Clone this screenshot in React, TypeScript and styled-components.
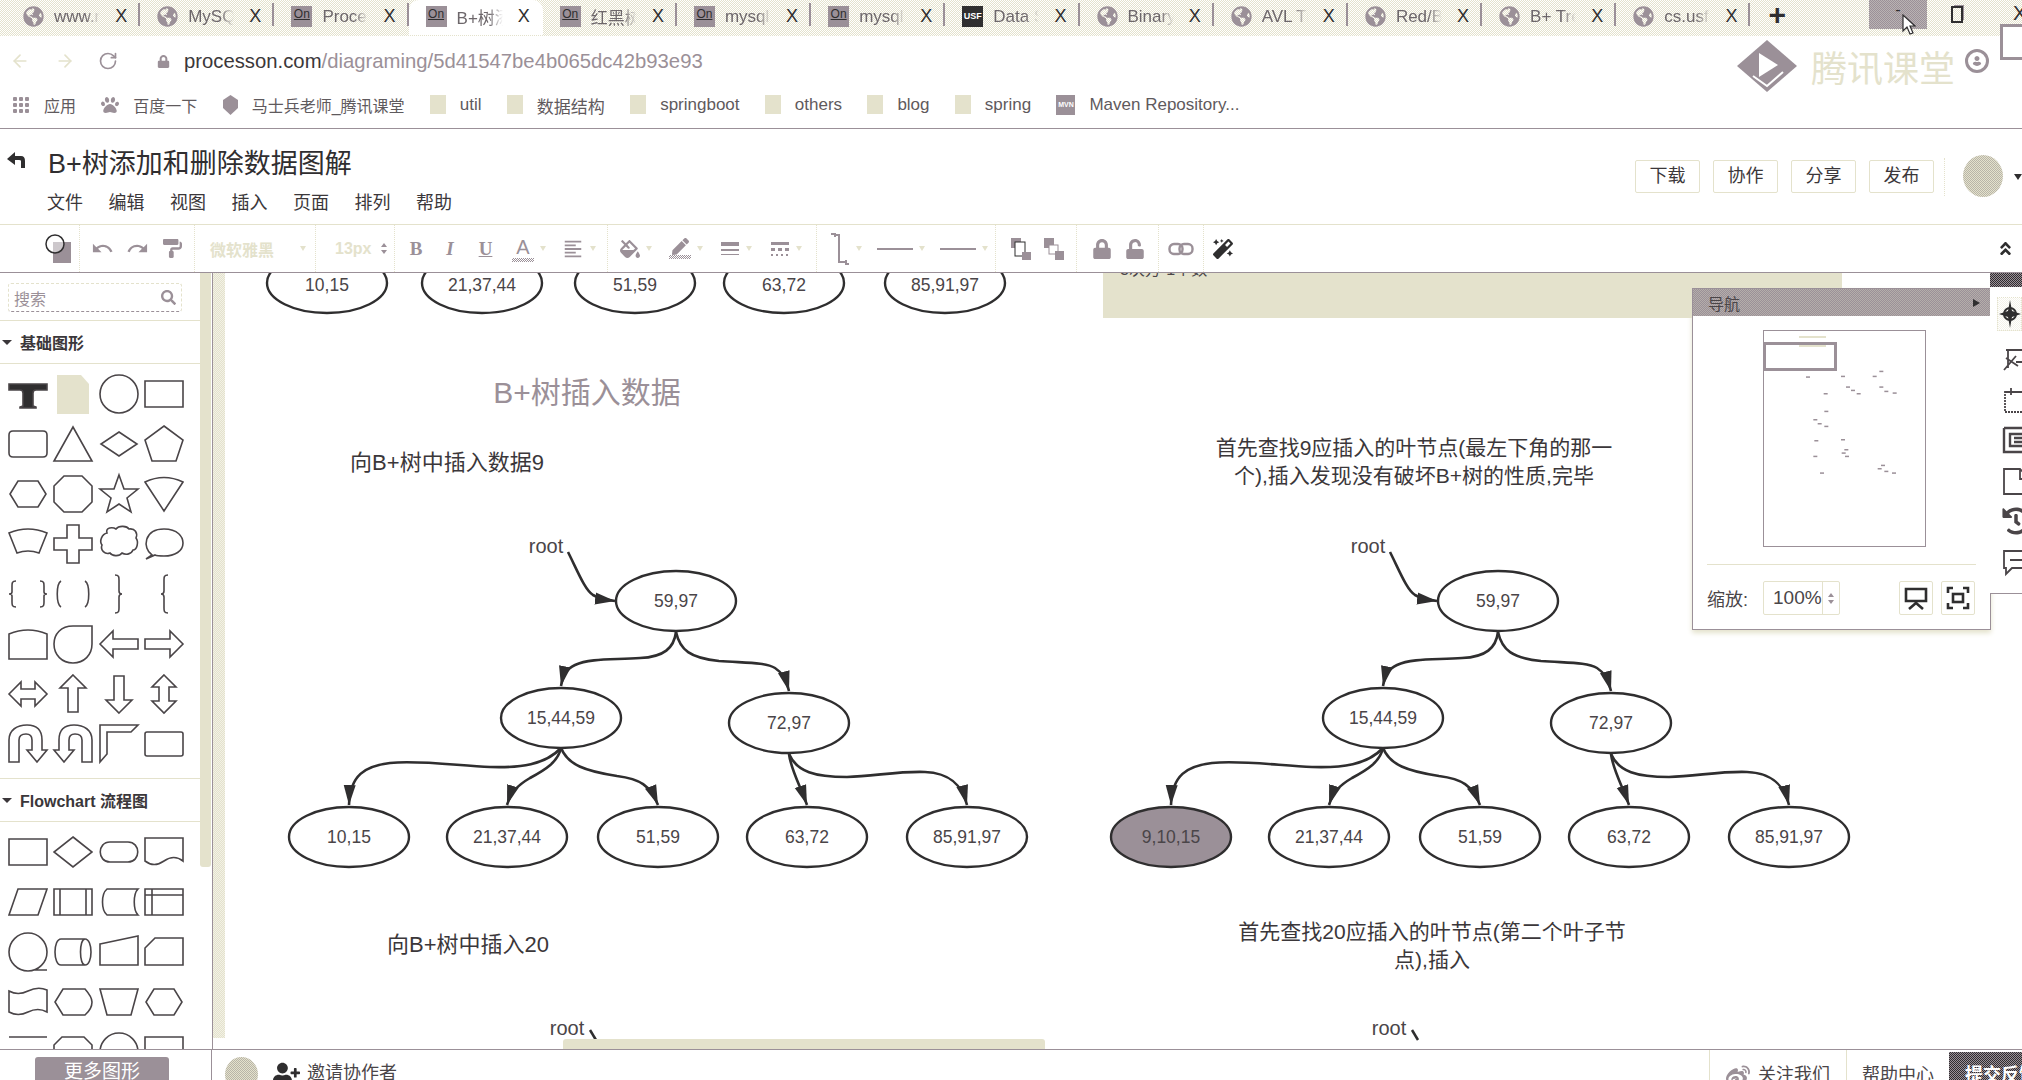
import React from 'react'
import styled, { createGlobalStyle } from 'styled-components'
import { FaAngleDoubleUp, FaFillDrip, FaGlobeAmericas, FaHistory, FaLock, FaMagic, FaPaintRoller, FaPaw, FaPen, FaSearch, FaUnlock, FaUser, FaUserPlus, FaWeibo } from 'react-icons/fa'
import { MdFormatAlignLeft, MdRedo, MdUndo } from 'react-icons/md'
import { ArrowLeft, ArrowRight, RotateCw } from 'lucide-react'

const Beige = '#e4e2cc'
const Gray = '#9b9098'
const Ink = '#2f2e2f'
const Sans = '"Liberation Sans", "Noto Sans CJK SC", sans-serif'

const dither = (a: string, b: string) => `repeating-conic-gradient(${a} 0 25%, ${b} 0 50%) 0 0 / 2px 2px`

const GlobalStyle = createGlobalStyle`
  html, body { margin: 0; padding: 0; background: #fff; }
  body { font-family: ${Sans}; color: ${Ink}; }
  * { box-sizing: border-box; }
`

const Page = styled.div`
  position: relative;
  display: flex;
  flex-direction: column;
  width: 2022px;
  height: 1080px;
  overflow: hidden;
`

/* browser chrome */
const TabStrip = styled.div`
  display: flex;
  flex: 0 0 36px;
  padding-left: 6px;
  background: ${dither(Beige, '#fff')};
`

const Tab = styled.div<{ $active?: boolean }>`
  display: flex;
  align-items: center;
  width: 134.2px;
  height: 35px;
  padding: 0 13px 2px 17px;
  gap: 10px;
  background: ${p => (p.$active ? '#fff' : 'transparent')};
  border-radius: 10px 10px 0 0;
  position: relative;
  &::after {
    content: '';
    position: absolute;
    right: 0;
    top: 3px;
    bottom: 9px;
    border-right: 2px solid ${p => (p.$active ? 'transparent' : Gray)};
  }
`

const OnIcon = styled.span`
  flex: 0 0 21px;
  height: 21px;
  background: ${Gray};
  color: ${Ink};
  font-size: 12px;
  line-height: 17px;
  text-align: center;
  text-decoration: underline;
`

const UsfIcon = styled(OnIcon)`
  background: ${Ink};
  color: #fff;
  font-size: 9px;
  font-weight: 700;
  line-height: 21px;
  text-decoration: none;
`

const TabTitle = styled.span`
  width: 46px;
  overflow: hidden;
  white-space: nowrap;
  font-size: 17px;
  color: #6d676b;
  mask-image: linear-gradient(90deg, #000 70%, transparent);
`

const TabClose = styled.span`
  margin-left: auto;
  font-size: 18px;
  color: ${Ink};
`

const NewTab = styled.span`
  margin-left: 18px;
  font-size: 30px;
  line-height: 30px;
  font-weight: 700;
  color: ${Ink};
`

const WinControls = styled.div`
  display: flex;
  margin-left: auto;
  height: 29px;
`

const WinMin = styled.div`
  position: relative;
  width: 58px;
  background: ${dither(Gray, '#b9b3b3')};
  color: ${Ink};
  text-align: center;
  line-height: 20px;
`

const WinRestore = styled.div`
  width: 60px;
  display: flex;
  align-items: center;
  justify-content: center;
`

const RestoreGlyph = styled.span`
  display: block;
  width: 12px;
  height: 17px;
  border: 2px solid ${Ink};
  box-shadow: 2px -2px 0 -1px ${Gray};
`

const WinClose = styled.div`
  width: 35px;
  padding-left: 26px;
  font-size: 20px;
  line-height: 26px;
  color: ${Ink};
`

const Cursor = styled.svg`
  position: absolute;
  left: 33px;
  top: 14px;
`

const AddressBar = styled.div`
  display: flex;
  align-items: center;
  flex: 0 0 52px;
  padding: 0 33px 2px 8px;
`

const NavButton = styled.span<{ $w: number; $dark?: boolean }>`
  display: flex;
  justify-content: center;
  width: ${p => p.$w}px;
  color: ${p => (p.$dark ? Gray : Beige)};
`

const LockGlyph = styled(FaLock)`
  margin: 0 14px 0 39px;
  color: ${Gray};
`

const Url = styled.div`
  font-size: 20.3px;
  color: ${Gray};
  & > b {
    font-weight: 400;
    color: #3b373a;
  }
`

const Profile = styled(FaUser)`
  margin-left: auto;
  width: 24px;
  height: 24px;
  padding: 4px;
  border: 3px solid ${Gray};
  border-radius: 50%;
  color: ${Gray};
`

const Watermark = styled.div`
  position: absolute;
  left: 1737px;
  top: 40px;
  display: flex;
  align-items: center;
  gap: 14px;
  font-size: 36px;
  color: ${Beige};
  font-family: "Noto Sans CJK SC", sans-serif;
`

const ExtBox = styled.div`
  position: absolute;
  left: 2000px;
  top: 24px;
  width: 30px;
  height: 36px;
  border: 3px solid ${Gray};
  background: #fff;
`

const Bookmarks = styled.div`
  display: flex;
  align-items: center;
  flex: 0 0 41px;
  gap: 25.3px;
  padding: 0 0 6px 12px;
  border-bottom: 1px solid ${Gray};
  font-size: 16px;
  color: #5f5a5d;
`

const Bookmark = styled.div`
  display: flex;
  align-items: center;
  gap: 14px;
  white-space: nowrap;
`

const BookmarkEn = styled.span`
  font-size: 17px;
`

const Folder = styled.span`
  width: 16px;
  height: 20px;
  background: ${Beige};
  border-bottom: 1px solid #fff;
`

const MvnIcon = styled.span`
  width: 19px;
  height: 20px;
  background: ${Gray};
  color: #fff;
  font-size: 7px;
  line-height: 20px;
  text-align: center;
  font-weight: 700;
`

const AppsGrid = styled.span`
  width: 18px;
  height: 18px;
  background: radial-gradient(circle, ${Gray} 2px, transparent 2.5px) 0 0 / 6px 6px;
`

/* document title */
const TitleBar = styled.div`
  display: flex;
  flex: 0 0 95px;
`

const TitleColumn = styled.div`
  padding-top: 16px;
`

const TitleRow = styled.div`
  display: flex;
  align-items: center;
  gap: 22px;
  padding-left: 6px;
  height: 32px;
  font-size: 27px;
  color: #302e30;
`

const MenuRow = styled.div`
  display: flex;
  gap: 25.5px;
  margin-top: 14px;
  padding-left: 47px;
  font-size: 18px;
  line-height: 24px;
  color: #3b373a;
`

const Actions = styled.div`
  display: flex;
  align-items: flex-start;
  gap: 13px;
  margin-left: auto;
  padding-top: 31px;
`

const ActionButton = styled.div`
  width: 65px;
  height: 33px;
  border: 1px solid ${Beige};
  border-radius: 2px;
  text-align: center;
  font-size: 18px;
  line-height: 31px;
  color: #3b373a;
`

const ActionDivider = styled.div`
  width: 0;
  height: 38px;
  margin: -2px 3px 0 -3px;
  border-left: 1px dotted ${Beige};
`

const Avatar = styled.div<{ $size: number }>`
  flex: none;
  width: ${p => p.$size}px;
  height: ${p => p.$size + 2}px;
  border-radius: 50%;
  background: ${dither(Beige, '#b8b4a8')};
`

const HeaderAvatar = styled(Avatar)`
  margin: -5px 0 0 2px;
`

const HeaderCaret = styled.span`
  margin: 14px 0 0 -2px;
  border-top: 6px solid ${Ink};
  border-left: 4px solid transparent;
  border-right: 4px solid transparent;
`

/* toolbar */
const Toolbar = styled.div`
  display: flex;
  flex: 0 0 49px;
  padding-left: 36px;
  border-top: 1px solid ${Beige};
  border-bottom: 1px solid ${Gray};
`

const ToolGroup = styled.div<{ $w: number; $pad?: number }>`
  display: flex;
  align-items: center;
  flex: 0 0 ${p => p.$w}px;
  padding-left: ${p => p.$pad ?? 0}px;
  border-right: 1px dotted ${Beige};
`

const Tool = styled.div<{ $w: number }>`
  display: flex;
  align-items: center;
  justify-content: center;
  gap: 6px;
  flex: 0 0 ${p => p.$w}px;
  color: ${Gray};
`

const Caret = styled.span`
  width: 0;
  border-top: 5px solid ${Beige};
  border-left: 3px solid transparent;
  border-right: 3px solid transparent;
`

const FontSelect = styled.span`
  width: 90px;
  margin-left: 15px;
  font-size: 16px;
  color: ${Beige};
  font-weight: 700;
`

const SizeSelect = styled.span`
  margin-left: 19px;
  width: 46px;
  font-size: 16px;
  color: ${Beige};
  font-weight: 700;
`

const Spin = styled.span`
  display: flex;
  flex-direction: column;
  align-items: center;
  justify-content: center;
  gap: 3px;
`

const SpinUp = styled.i`
  border-bottom: 4px solid ${Gray};
  border-left: 3px solid transparent;
  border-right: 3px solid transparent;
`

const SpinDown = styled.i`
  border-top: 4px solid ${Gray};
  border-left: 3px solid transparent;
  border-right: 3px solid transparent;
`

const FormatGlyph = styled.span<{ $italic?: boolean; $under?: boolean }>`
  font-family: "Liberation Serif", serif;
  font-size: 19px;
  font-weight: 700;
  font-style: ${p => (p.$italic ? 'italic' : 'normal')};
  text-decoration: ${p => (p.$under ? 'underline' : 'none')};
  color: ${Gray};
`

const ColorGlyph = styled.span`
  display: flex;
  flex-direction: column;
  align-items: center;
  font-size: 20px;
  line-height: 22px;
  color: ${Gray};
  &::after {
    content: '';
    width: 22px;
    height: 4px;
    background: ${dither(Gray, '#fff')};
  }
`

const PenGlyph = styled(ColorGlyph)`
  font-size: 15px;
`

const Collapse = styled.div`
  display: flex;
  align-items: center;
  margin-left: auto;
  padding-right: 8px;
`

/* main */
const Main = styled.div`
  display: flex;
  flex: 0 0 777px;
  height: 777px;
  border-bottom: 1px solid ${Gray};
`

const Sidebar = styled.aside`
  display: flex;
  flex: 0 0 213px;
  overflow: hidden;
`

const Palette = styled.div`
  flex: 0 0 200px;
  overflow: hidden;
`

const SearchArea = styled.div`
  padding: 10px 18px 8px 8px;
  border-bottom: 1px solid ${Beige};
`

const SearchBox = styled.div`
  display: flex;
  align-items: center;
  justify-content: space-between;
  height: 29px;
  padding: 0 5px;
  border: 1px dashed ${Beige};
  border-bottom-color: ${Gray};
  border-radius: 3px;
  font-size: 16px;
  color: ${Gray};
`

const SectionHead = styled.div`
  display: flex;
  align-items: center;
  gap: 8px;
  height: 43px;
  padding-left: 2px;
  font-size: 16px;
  font-weight: 700;
  color: #3b373a;
  border-bottom: 1px solid ${Beige};
`

const HeadCaret = styled.span`
  border-top: 5px solid #3b373a;
  border-left: 5px solid transparent;
  border-right: 5px solid transparent;
`

const ShapeGrid = styled.div<{ $bottom?: number }>`
  display: grid;
  grid-template-columns: repeat(4, 45.5px);
  grid-auto-rows: 50px;
  padding: 5px 0 ${p => p.$bottom ?? 0}px 5px;
  border-bottom: 1px solid ${Beige};
`

const ShapeCell = styled.div`
  display: flex;
  align-items: center;
  justify-content: center;
`

const ShapeSvg = styled.svg`
  width: 40px;
  height: 40px;
  overflow: visible;
  fill: #fff;
  stroke: #4a4548;
  stroke-width: 1.6;
`

const ScrollColumn = styled.div`
  flex: 0 0 13px;
  border-right: 1px solid ${Gray};
  padding-right: 1px;
`

const ScrollThumbV = styled.div<{ $h: number; $w?: number }>`
  width: ${p => p.$w ?? 11}px;
  height: ${p => p.$h}px;
  background: ${Beige};
  border-radius: 0 0 3px 3px;
`

const Canvas = styled.div`
  position: relative;
  flex: 1;
  overflow: hidden;
`

const DiagramSvg = styled.svg`
  position: absolute;
  left: 0;
  top: 0;
`

const NodeText = styled.text`
  font-family: ${Sans};
  font-size: 17.5px;
  fill: #4a4548;
  text-anchor: middle;
  dominant-baseline: central;
`

const RootText = styled(NodeText)`
  font-size: 20px;
`

const DiagramLabel = styled.div<{ $x: number; $y: number; $size?: number; $heading?: boolean }>`
  position: absolute;
  left: ${p => p.$x - 213}px;
  top: ${p => p.$y - 273}px;
  transform: translate(-50%, -50%);
  text-align: center;
  white-space: nowrap;
  font-size: ${p => p.$size ?? 21}px;
  line-height: 28px;
  color: ${p => (p.$heading ? Gray : '#3b373a')};
`

const NoteBox = styled.div`
  position: absolute;
  left: 890px;
  top: 0;
  width: 739px;
  height: 45px;
  background: ${Beige};
  padding-left: 17px;
  font-size: 16px;
  line-height: 16px;
  color: #4a4548;
  overflow: hidden;
`

const NoteText = styled.div`
  margin-top: -11px;
`

const CanvasScrollV = styled.div`
  position: absolute;
  left: 0;
  top: 0;
  width: 12px;
  height: 765px;
  background: ${dither(Beige, '#f2f1e6')};
`

const CanvasScrollH = styled.div`
  position: absolute;
  left: 350px;
  bottom: 0;
  width: 482px;
  height: 10px;
  background: ${Beige};
  border-radius: 3px 3px 0 0;
`

/* navigator */
const NavPanel = styled.section`
  position: absolute;
  left: 1479px;
  top: 15px;
  width: 299px;
  height: 342px;
  display: flex;
  flex-direction: column;
  background: #fff;
  border: 1px solid ${Gray};
  box-shadow: 0 3px 5px ${Beige};
`

const NavHead = styled.div`
  display: flex;
  align-items: center;
  justify-content: space-between;
  flex: 0 0 27px;
  padding: 0 10px 0 15px;
  background: ${dither(Gray, '#b4aeaa')};
  font-size: 16px;
  color: #4a4548;
`

const HeadArrow = styled.span`
  border-left: 7px solid ${Ink};
  border-top: 4px solid transparent;
  border-bottom: 4px solid transparent;
`

const NavBody = styled.div`
  display: flex;
  justify-content: center;
  flex: 0 0 249px;
  padding: 14px 0 0 6px;
  margin: 0 14px;
  border-bottom: 1px solid ${Beige};
`

const MiniPage = styled.div`
  position: relative;
  width: 163px;
  height: 217px;
  border: 1px solid ${Gray};
`

const MiniView = styled.div`
  position: absolute;
  left: -1px;
  top: 11px;
  width: 74px;
  height: 29px;
  border: 3px solid ${Gray};
`

const ZoomRow = styled.div`
  display: flex;
  align-items: center;
  padding: 16px 15px 0 14px;
  font-size: 18px;
  color: #4a4548;
`

const ZoomInput = styled.div`
  display: flex;
  align-items: center;
  justify-content: space-between;
  width: 77px;
  height: 34px;
  margin-left: 15px;
  padding-left: 9px;
  border: 1px solid ${Beige};
  border-radius: 2px;
  font-size: 19px;
`

const ZoomSpin = styled(Spin)`
  width: 18px;
  height: 100%;
  border-left: 1px solid ${Beige};
`

const ZoomButton = styled.div<{ $first?: boolean }>`
  display: flex;
  align-items: center;
  justify-content: center;
  width: 34px;
  height: 34px;
  margin-left: ${p => (p.$first ? 'auto' : '8px')};
  border: 1px solid ${Beige};
  border-radius: 2px;
`

const RightRail = styled.div`
  position: absolute;
  right: 0;
  top: 0;
  display: flex;
  flex-direction: column;
  width: 32px;
  height: 321px;
  background: #fff;
  border-bottom: 1px solid ${Gray};
  overflow: hidden;
`

const RailTop = styled.div`
  flex: 0 0 14px;
  background: ${dither(Ink, Gray)};
`

const RailActive = styled.div`
  display: flex;
  align-items: center;
  justify-content: center;
  flex: 0 0 34px;
  margin: 10px 0 8px 7px;
  border: 1px dotted ${Beige};
  background: ${dither('#fff', '#f4f3ea')};
`

const RailItem = styled.div`
  display: flex;
  align-items: center;
  flex: 0 0 40.5px;
  padding-left: 12px;
  color: #4a4548;
`

const RailSvg = styled.svg`
  flex: none;
  width: 30px;
  height: 30px;
  fill: none;
  stroke: #4a4548;
  stroke-width: 1.8;
`

/* bottom bar */
const BottomBar = styled.footer`
  display: flex;
  flex: 1;
  min-height: 0;
  overflow: hidden;
  font-size: 18px;
  color: #4a4548;
`

const MoreArea = styled.div`
  flex: 0 0 212px;
  padding: 7px 0 0 35px;
  border-right: 1px solid ${Gray};
`

const MoreButton = styled.div`
  width: 134px;
  height: 30px;
  border-radius: 3px 3px 0 0;
  background: ${Gray};
  color: #fff;
  font-size: 19px;
  line-height: 30px;
  text-align: center;
`

const InviteArea = styled.div`
  display: flex;
  gap: 7px;
  padding: 7px 0 0 13px;
  height: 60px;
`

const InviteAvatar = styled(Avatar)`
  margin-right: 8px;
`

const InviteText = styled.span`
  line-height: 32px;
`

const FootRight = styled.div`
  display: flex;
  margin-left: auto;
`

const FootItem = styled.div<{ $w: number }>`
  display: flex;
  justify-content: center;
  gap: 8px;
  width: ${p => p.$w}px;
  padding-top: 14px;
  border-left: 1px solid ${Beige};
  line-height: 22px;
`

const FeedbackButton = styled.div`
  width: 73px;
  margin-top: 2px;
  padding: 12px 0 0 16px;
  background: ${dither(Ink, Gray)};
  color: #fff;
  font-weight: 700;
  white-space: nowrap;
  line-height: 22px;
  overflow: hidden;
`

type TabInfo = { title: string; icon: 'globe' | 'on' | 'usf'; active?: boolean }

const tabs: TabInfo[] = [
  { title: 'www.r', icon: 'globe' },
  { title: 'MySQ', icon: 'globe' },
  { title: 'Proces', icon: 'on' },
  { title: 'B+树添', icon: 'on', active: true },
  { title: '红黑树', icon: 'on' },
  { title: 'mysql', icon: 'on' },
  { title: 'mysql', icon: 'on' },
  { title: 'Data S', icon: 'usf' },
  { title: 'Binary', icon: 'globe' },
  { title: 'AVL Tr', icon: 'globe' },
  { title: 'Red/B', icon: 'globe' },
  { title: 'B+ Tre', icon: 'globe' },
  { title: 'cs.usfc', icon: 'globe' },
]

const folders = ['util', '数据结构', 'springboot', 'others', 'blog', 'spring']
const menus = ['文件', '编辑', '视图', '插入', '页面', '排列', '帮助']
const actions = ['下载', '协作', '分享', '发布']

type Shape = { d: string; fill?: string }

const arch = 'M1 38V16C1 6 9 1 19 1C29 1 34 6 34 16V26H39L29 38L19 26H24V16C24 12 22 10 18 10C14 10 11 12 11 16V38Z'
const archMirror = 'M39 38V16C39 6 31 1 21 1C11 1 6 6 6 16V26H1L11 38L21 26H16V16C16 12 18 10 22 10C26 10 29 12 29 16V38Z'

const basicShapes: Shape[] = [
  { d: 'M1 10H39V16H28Q25 16 25 19V32L28 33V34H12V33L15 32V19Q15 16 12 16H1Z', fill: Ink },
  { d: 'M4 1H28L36 10V40H4Z', fill: Beige },
  { d: 'M39 20A19 19 0 1 1 1 20A19 19 0 1 1 39 20Z' },
  { d: 'M1 7H39V33H1Z' },
  { d: 'M5 7H35Q39 7 39 11V29Q39 33 35 33H5Q1 33 1 29V11Q1 7 5 7Z' },
  { d: 'M20 3L39 37H1Z' },
  { d: 'M20 8L38 20L20 32L2 20Z' },
  { d: 'M20 2L39 16L32 37H8L1 16Z' },
  { d: 'M10 7H30L38 20L30 33H10L2 20Z' },
  { d: 'M11 2H29L39 12V28L29 38H11L1 28V12Z' },
  { d: 'M20 1L25 15L39 15L28 24L32 38L20 30L8 38L12 24L1 15L15 15Z' },
  { d: 'M1 8Q20 -1 39 8L20 37Z' },
  { d: 'M1 9Q20 1 39 9L31 29Q20 25 9 29Z' },
  { d: 'M14 1H26V14H39V26H26V39H14V26H1V14H14Z' },
  { d: 'M8 9C6 3 14 3 17 5C20 1 28 2 30 5C36 4 39 9 37 14C40 18 38 26 34 26C32 31 26 31 23 29C20 33 13 32 11 29C6 31 1 26 3 21C0 17 3 10 8 9Z' },
  { d: 'M8 31C-2 24 0 5 20 5C34 5 39 13 39 19C39 27 31 32 20 32C16 32 13 32 11 31L2 35Z' },
  { d: 'M8 7C4 7 4 9 4 12V18Q4 20 1 20Q4 20 4 22V28C4 31 4 33 8 33M32 7C36 7 36 9 36 12V18Q36 20 39 20Q36 20 36 22V28C36 31 36 33 32 33' },
  { d: 'M8 7C3 10 3 30 8 33M32 7C37 10 37 30 32 33' },
  { d: 'M16 1C20 1 20 3 20 6V17Q20 20 23 20Q20 20 20 23V34C20 37 20 39 16 39' },
  { d: 'M24 1C20 1 20 3 20 6V17Q20 20 17 20Q20 20 20 23V34C20 37 20 39 24 39' },
  { d: 'M1 10Q20 2 39 10V35H1Z' },
  { d: 'M39 2H20C8 2 1 10 1 20C1 31 9 39 20 39C31 39 39 31 39 20Z' },
  { d: 'M1 20L14 7V15H39V25H14V33Z' },
  { d: 'M39 20L26 7V15H1V25H26V33Z' },
  { d: 'M1 20L13 8V15H27V8L39 20L27 32V25H13V32Z' },
  { d: 'M20 1L33 14H25V38H15V14H7Z' },
  { d: 'M20 39L33 26H25V2H15V26H7Z' },
  { d: 'M20 1L32 13H25V27H32L20 39L8 27H15V13H8Z' },
  { d: arch },
  { d: archMirror },
  { d: 'M1 1H39L32 8H8V30L1 38Z' },
  { d: 'M3 8H37Q39 8 39 10V30Q39 32 37 32H3Q1 32 1 30V10Q1 8 3 8Z' },
]

const flowShapes: Shape[] = [
  { d: 'M1 7H39V33H1Z' },
  { d: 'M20 5L39 20L20 35L1 20Z' },
  { d: 'M11 10H29C42 10 42 30 29 30H11C-2 30 -2 10 11 10Z' },
  { d: 'M1 6H39V29Q30 22 20 29Q10 36 1 29Z' },
  { d: 'M10 7H39L30 33H1Z' },
  { d: 'M1 7H39V33H1ZM7 7V33M33 7V33' },
  { d: 'M8 7H39C34 12 34 28 39 33H8C2 28 2 12 8 7Z' },
  { d: 'M1 7H39V33H1ZM8 7V33M1 13H39' },
  { d: 'M39 20A19 19 0 1 1 1 20A19 19 0 1 1 39 20ZM26 38H39' },
  { d: 'M8 7H32C40 7 40 33 32 33H8C0 33 0 7 8 7ZM32 7C26 7 26 33 32 33' },
  { d: 'M1 12L39 4V33H1Z' },
  { d: 'M11 6H39V33H1V16Z' },
  { d: 'M1 9Q10 14 20 9Q30 4 39 8V30Q30 25 20 30Q10 35 1 30Z' },
  { d: 'M10 7H32Q39 15 39 20Q39 27 32 33H10L2 20Z' },
  { d: 'M1 7H39L32 33H8Z' },
  { d: 'M10 7H30L38 20L30 33H10L2 20Z' },
  { d: 'M1 5H39' },
  { d: 'M9 5H31L39 13V40H1V13Z' },
  { d: 'M1 40V20A19 19 0 0 1 39 20V40Z' },
  { d: 'M1 5H39V40H1Z' },
]

const topLeaves = [
  { cx: 327, label: '10,15' },
  { cx: 482, label: '21,37,44' },
  { cx: 635, label: '51,59' },
  { cx: 784, label: '63,72' },
  { cx: 945, label: '85,91,97' },
]

const edges = [
  'M676 632C674 648 664 657 640 658C615 660 590 658 575 665C566 669 563 676 561 686',
  'M676 632C680 650 690 658 719 661C745 663 765 662 775 668C783 673 786 680 789 691',
  'M561 748C545 765 520 768 490 767C460 766 420 760 390 763C365 766 350 775 349 805',
  'M561 748C558 762 545 770 530 778C518 785 511 792 507 805',
  'M561 748C568 765 585 771 617 776C640 779 650 785 658 805',
  'M789 754C791 770 800 785 807 805',
  'M789 754C797 772 815 777 847 777C875 776 900 771 925 772C950 773 962 785 967 805',
  'M568 552C578 572 585 590 593 595C600 599 607 600 615 601',
]

const nodes = [
  { cx: 676, cy: 601, label: '59,97' },
  { cx: 561, cy: 718, label: '15,44,59' },
  { cx: 789, cy: 723, label: '72,97' },
  { cx: 507, cy: 837, label: '21,37,44' },
  { cx: 658, cy: 837, label: '51,59' },
  { cx: 807, cy: 837, label: '63,72' },
  { cx: 967, cy: 837, label: '85,91,97' },
]

const miniDots = [
  [375, 317], [480, 315], [575, 315], [595, 300], [495, 347], [510, 357], [527, 367], [595, 347], [610, 360], [635, 365],
  [428, 367], [430, 420], [397, 445], [410, 457], [430, 465], [400, 508], [480, 505], [490, 535], [482, 545], [492, 555],
  [397, 555], [417, 605], [600, 582], [590, 592], [610, 600], [633, 605],
]

const TabIcon = ({ kind }: { kind: TabInfo['icon'] }) => {
  if (kind === 'on') return <OnIcon>On</OnIcon>
  if (kind === 'usf') return <UsfIcon>USF</UsfIcon>
  return <FaGlobeAmericas size={21} color={Gray} style={{ flex: 'none' }} />
}

const ShapePalette = ({ shapes, bottom }: { shapes: Shape[]; bottom?: number }) => (
  <ShapeGrid $bottom={bottom}>
    {shapes.map((s, i) => (
      <ShapeCell key={i}>
        <ShapeSvg viewBox="0 0 40 40">
          <path d={s.d} fill={s.fill} stroke={s.fill === Beige ? 'none' : undefined} />
        </ShapeSvg>
      </ShapeCell>
    ))}
  </ShapeGrid>
)

const Tree = ({ dx, first }: { dx: number; first: { label: string; fill: string } }) => (
  <g transform={`translate(${dx} 0)`}>
    {edges.map((d, i) => (
      <path key={i} d={d} fill="none" stroke={Ink} strokeWidth={2.6} markerEnd="url(#head)" />
    ))}
    <RootText x={546} y={546}>root</RootText>
    <ellipse cx={349} cy={837} rx={60} ry={30} fill={first.fill} stroke={Ink} strokeWidth={2.4} />
    <NodeText x={349} y={837}>{first.label}</NodeText>
    {nodes.map(n => (
      <g key={n.cx}>
        <ellipse cx={n.cx} cy={n.cy} rx={60} ry={30} fill="#fff" stroke={Ink} strokeWidth={2.4} />
        <NodeText x={n.cx} y={n.cy}>{n.label}</NodeText>
      </g>
    ))}
    <RootText x={567} y={1028}>root</RootText>
    <path d="M590 1030L596 1040" stroke={Ink} strokeWidth={2.5} />
  </g>
)

export default function App() {
  return (
    <Page>
      <GlobalStyle />
      <TabStrip>
        {tabs.map((t, i) => (
          <Tab key={i} $active={t.active}>
            <TabIcon kind={t.icon} />
            <TabTitle>{t.title}</TabTitle>
            <TabClose>X</TabClose>
          </Tab>
        ))}
        <NewTab>+</NewTab>
        <WinControls>
          <WinMin>
            -
            <Cursor width="14" height="22" viewBox="0 0 14 22">
              <path d="M1 1V17L5 13L8 20L11 19L8 12H13Z" fill="#fff" stroke={Ink} strokeWidth="1.2" />
            </Cursor>
          </WinMin>
          <WinRestore>
            <RestoreGlyph />
          </WinRestore>
          <WinClose>X</WinClose>
        </WinControls>
      </TabStrip>

      <AddressBar>
        <NavButton $w={24}><ArrowLeft size={20} /></NavButton>
        <NavButton $w={66}><ArrowRight size={20} /></NavButton>
        <NavButton $w={20} $dark><RotateCw size={20} /></NavButton>
        <LockGlyph size={13} />
        <Url><b>processon.com</b>/diagraming/5d41547be4b065dc42b93e93</Url>
        <Profile />
      </AddressBar>
      <Watermark>
        <svg width="60" height="52" viewBox="0 0 60 52">
          <path d="M30 0L60 26L30 52L0 26Z" fill={Gray} />
          <path d="M22 13L41 25L22 37Z" fill="#fff" />
          <path d="M16 36L30 46L46 32" fill="none" stroke="#fff" strokeWidth="2" />
        </svg>
        <span>腾讯课堂</span>
      </Watermark>
      <ExtBox />

      <Bookmarks>
        <Bookmark><AppsGrid />应用</Bookmark>
        <Bookmark><FaPaw size={18} color={Gray} />百度一下</Bookmark>
        <Bookmark>
          <svg width="15" height="20" viewBox="0 0 15 20">
            <path d="M7.5 0L15 5V13L7.5 20L0 13V5Z" fill={Gray} />
          </svg>
          马士兵老师_腾讯课堂
        </Bookmark>
        {folders.map(f => (
          <Bookmark key={f}><Folder /><BookmarkEn>{f}</BookmarkEn></Bookmark>
        ))}
        <Bookmark><MvnIcon>MVN</MvnIcon><BookmarkEn>Maven Repository...</BookmarkEn></Bookmark>
      </Bookmarks>

      <TitleBar>
        <TitleColumn>
          <TitleRow>
            <svg width="20" height="20" viewBox="0 0 20 20">
              <path d="M1 8L9 1V5H15Q19 5 19 10V17H15V10Q15 9 13 9H9V14Z" fill={Ink} />
            </svg>
            <span>B+树添加和删除数据图解</span>
          </TitleRow>
          <MenuRow>
            {menus.map(m => <span key={m}>{m}</span>)}
          </MenuRow>
        </TitleColumn>
        <Actions>
          {actions.map(a => <ActionButton key={a}>{a}</ActionButton>)}
          <ActionDivider />
          <HeaderAvatar $size={40} />
          <HeaderCaret />
        </Actions>
      </TitleBar>

      <Toolbar>
        <ToolGroup $w={44} $pad={9}>
          <svg width="26" height="30" viewBox="0 0 26 30">
            <rect x="8" y="8" width="18" height="21" fill={Gray} />
            <circle cx="10" cy="10" r="9" fill="#fff" fillOpacity="0.5" stroke={Ink} strokeWidth="1.5" />
          </svg>
        </ToolGroup>
        <ToolGroup $w={115} $pad={5}>
          <Tool $w={35}><MdUndo size={23} /></Tool>
          <Tool $w={35}><MdRedo size={23} /></Tool>
          <Tool $w={35}><FaPaintRoller size={19} /></Tool>
        </ToolGroup>
        <ToolGroup $w={121}>
          <FontSelect>微软雅黑</FontSelect>
          <Caret />
        </ToolGroup>
        <ToolGroup $w={79}>
          <SizeSelect>13px</SizeSelect>
          <Spin><SpinUp /><SpinDown /></Spin>
        </ToolGroup>
        <ToolGroup $w={213} $pad={4}>
          <Tool $w={34}><FormatGlyph>B</FormatGlyph></Tool>
          <Tool $w={34}><FormatGlyph $italic>I</FormatGlyph></Tool>
          <Tool $w={37}><FormatGlyph $under>U</FormatGlyph></Tool>
          <Tool $w={50}><ColorGlyph>A</ColorGlyph><Caret /></Tool>
          <Tool $w={50}><MdFormatAlignLeft size={22} /><Caret /></Tool>
        </ToolGroup>
        <ToolGroup $w={209} $pad={3}>
          <Tool $w={50}><FaFillDrip size={20} /><Caret /></Tool>
          <Tool $w={50}><PenGlyph><FaPen size={17} /></PenGlyph><Caret /></Tool>
          <Tool $w={50}>
            <svg width="20" height="18" viewBox="0 0 20 18"><path d="M1 2H19V6H1ZM1 9H19V11H1ZM1 14H19V15H1Z" fill={Gray} /></svg>
            <Caret />
          </Tool>
          <Tool $w={50}>
            <svg width="20" height="18" viewBox="0 0 20 18"><path d="M1 2H19V5H1ZM1 8H5V11H1ZM8 8H12V11H8ZM15 8H19V11H15ZM1 14H3V16H1ZM6 14H8V16H6ZM11 14H13V16H11ZM16 14H18V16H16Z" fill={Gray} /></svg>
            <Caret />
          </Tool>
        </ToolGroup>
        <ToolGroup $w={178} $pad={6}>
          <Tool $w={46}>
            <svg width="20" height="34" viewBox="0 0 20 34"><path d="M1 2H5V5M9 5V30H16" fill="none" stroke={Gray} strokeWidth="2" /><path d="M5 3H9V7M16 28V32H19" fill="none" stroke={Gray} strokeWidth="2" /></svg>
            <Caret />
          </Tool>
          <Tool $w={64}>
            <svg width="36" height="4" viewBox="0 0 36 4"><path d="M0 2H36" stroke={Gray} strokeWidth="2" /></svg>
            <Caret />
          </Tool>
          <Tool $w={62}>
            <svg width="36" height="4" viewBox="0 0 36 4"><path d="M0 2H36" stroke={Gray} strokeWidth="2" /></svg>
            <Caret />
          </Tool>
        </ToolGroup>
        <ToolGroup $w={81} $pad={8}>
          <Tool $w={33}>
            <svg width="22" height="24" viewBox="0 0 22 24"><rect x="1" y="1" width="10" height="10" fill={Gray} /><rect x="5" y="5" width="10" height="14" fill="#fff" stroke={Ink} /><rect x="12" y="15" width="9" height="8" fill={Gray} /></svg>
          </Tool>
          <Tool $w={33}>
            <svg width="22" height="24" viewBox="0 0 22 24"><rect x="1" y="1" width="10" height="10" fill={Gray} /><rect x="6" y="8" width="9" height="9" fill="#fff" stroke={Gray} /><rect x="12" y="14" width="9" height="9" fill={Gray} /></svg>
          </Tool>
        </ToolGroup>
        <ToolGroup $w={82} $pad={8}>
          <Tool $w={33}><FaLock size={20} /></Tool>
          <Tool $w={33}><FaUnlock size={20} /></Tool>
        </ToolGroup>
        <ToolGroup $w={45}>
          <Tool $w={44}>
            <svg width="26" height="14" viewBox="0 0 26 14" fill="none" stroke={Gray} strokeWidth="2.4">
              <rect x="1.5" y="2" width="13" height="10" rx="4.5" />
              <rect x="11.5" y="2" width="13" height="10" rx="4.5" />
            </svg>
          </Tool>
        </ToolGroup>
        <Tool $w={38}><FaMagic size={20} color={Ink} /></Tool>
        <Collapse><FaAngleDoubleUp size={17} color={Ink} /></Collapse>
      </Toolbar>

      <Main>
        <Sidebar>
          <Palette>
            <SearchArea>
              <SearchBox>搜索<FaSearch size={15} /></SearchBox>
            </SearchArea>
            <SectionHead><HeadCaret />基础图形</SectionHead>
            <ShapePalette shapes={basicShapes} bottom={9} />
            <SectionHead><HeadCaret />Flowchart 流程图</SectionHead>
            <ShapePalette shapes={flowShapes} />
          </Palette>
          <ScrollColumn>
            <ScrollThumbV $h={594} />
          </ScrollColumn>
        </Sidebar>
        <Canvas>
          <DiagramSvg width={1809} height={777} viewBox="213 273 1809 777">
            <defs>
              <marker id="head" markerUnits="userSpaceOnUse" markerWidth="22" markerHeight="14" refX="20" refY="7" orient="auto">
                <path d="M0 1L20 7L0 13Z" fill={Ink} />
              </marker>
            </defs>
            {topLeaves.map(n => (
              <g key={n.cx}>
                <ellipse cx={n.cx} cy={283} rx={60} ry={30} fill="#fff" stroke={Ink} strokeWidth={2.4} />
                <NodeText x={n.cx} y={285}>{n.label}</NodeText>
              </g>
            ))}
            <Tree dx={0} first={{ label: '10,15', fill: '#fff' }} />
            <Tree dx={822} first={{ label: '9,10,15', fill: Gray }} />
          </DiagramSvg>

          <NoteBox><NoteText>3次方-1个数</NoteText></NoteBox>
          <DiagramLabel $x={587} $y={393} $size={30} $heading>B+树插入数据</DiagramLabel>
          <DiagramLabel $x={447} $y={463} $size={22}>向B+树中插入数据9</DiagramLabel>
          <DiagramLabel $x={1414} $y={462}>首先查找9应插入的叶节点(最左下角的那一<br />个),插入发现没有破坏B+树的性质,完毕</DiagramLabel>
          <DiagramLabel $x={468} $y={945} $size={22}>向B+树中插入20</DiagramLabel>
          <DiagramLabel $x={1432} $y={946}>首先查找20应插入的叶节点(第二个叶子节<br />点),插入</DiagramLabel>

          <CanvasScrollV />
          <CanvasScrollH />

          <NavPanel>
            <NavHead>导航<HeadArrow /></NavHead>
            <NavBody>
              <MiniPage>
                <svg width="161" height="215" viewBox="0 0 161 215">
                  <path d="M35 6H62M35 15H62" stroke={Beige} strokeWidth="2" />
                  {miniDots.map(([x, y], i) => (
                    <rect key={i} x={(x - 243) / 3 - 2} y={(y - 178) / 3 - 1} width="4" height="1.5" fill={Gray} />
                  ))}
                </svg>
                <MiniView />
              </MiniPage>
            </NavBody>
            <ZoomRow>
              缩放:
              <ZoomInput>100%<ZoomSpin><SpinUp /><SpinDown /></ZoomSpin></ZoomInput>
              <ZoomButton $first>
                <svg width="24" height="24" viewBox="0 0 24 24"><path d="M2 3H22V15H2ZM12 15V18M12 17L5 23M12 17L19 23" fill="none" stroke={Ink} strokeWidth="2.6" /></svg>
              </ZoomButton>
              <ZoomButton>
                <svg width="24" height="24" viewBox="0 0 24 24"><path d="M2 7V2H7M17 2H22V7M22 17V22H17M7 22H2V17" fill="none" stroke={Ink} strokeWidth="2.6" /><rect x="7" y="8" width="10" height="8" fill="none" stroke={Ink} strokeWidth="2.6" /></svg>
              </ZoomButton>
            </ZoomRow>
          </NavPanel>

          <RightRail>
            <RailTop />
            <RailActive>
              <svg width="22" height="28" viewBox="0 0 22 28"><path d="M11 0L13 11L22 14L13 17L11 28L9 17L0 14L9 11Z" fill={Ink} /><circle cx="11" cy="14" r="6" fill="none" stroke={Ink} strokeWidth="2" /></svg>
            </RailActive>
            <RailItem>
              <RailSvg viewBox="0 0 30 30"><path d="M4 6H28M6 6V24M2 26L14 12M4 14L16 22M14 18H28" /></RailSvg>
            </RailItem>
            <RailItem>
              <RailSvg viewBox="0 0 30 30"><rect x="3" y="7" width="24" height="20" strokeDasharray="2 1" /><path d="M9 3V10M21 3V10M3 7H27" /></RailSvg>
            </RailItem>
            <RailItem>
              <RailSvg viewBox="0 0 30 30"><path d="M2 3H28M2 3V27H28M8 9H28V21H8ZM12 13H28M12 17H28" strokeWidth="2.4" /></RailSvg>
            </RailItem>
            <RailItem>
              <RailSvg viewBox="0 0 30 30"><path d="M2 3H18L28 13V28H2ZM18 3V13H28" /></RailSvg>
            </RailItem>
            <RailItem><FaHistory size={28} style={{ flex: 'none' }} /></RailItem>
            <RailItem>
              <RailSvg viewBox="0 0 30 30"><path d="M2 4H30V21H10L4 27V21H2ZM8 13H26" /></RailSvg>
            </RailItem>
          </RightRail>
        </Canvas>
      </Main>

      <BottomBar>
        <MoreArea><MoreButton>更多图形</MoreButton></MoreArea>
        <InviteArea>
          <InviteAvatar $size={33} />
          <FaUserPlus size={27} color={Ink} style={{ marginTop: 3 }} />
          <InviteText>邀请协作者</InviteText>
        </InviteArea>
        <FootRight>
          <FootItem $w={137}><FaWeibo size={24} color={Gray} />关注我们</FootItem>
          <FootItem $w={103}>帮助中心</FootItem>
          <FeedbackButton>提交反馈</FeedbackButton>
        </FootRight>
      </BottomBar>
    </Page>
  )
}
